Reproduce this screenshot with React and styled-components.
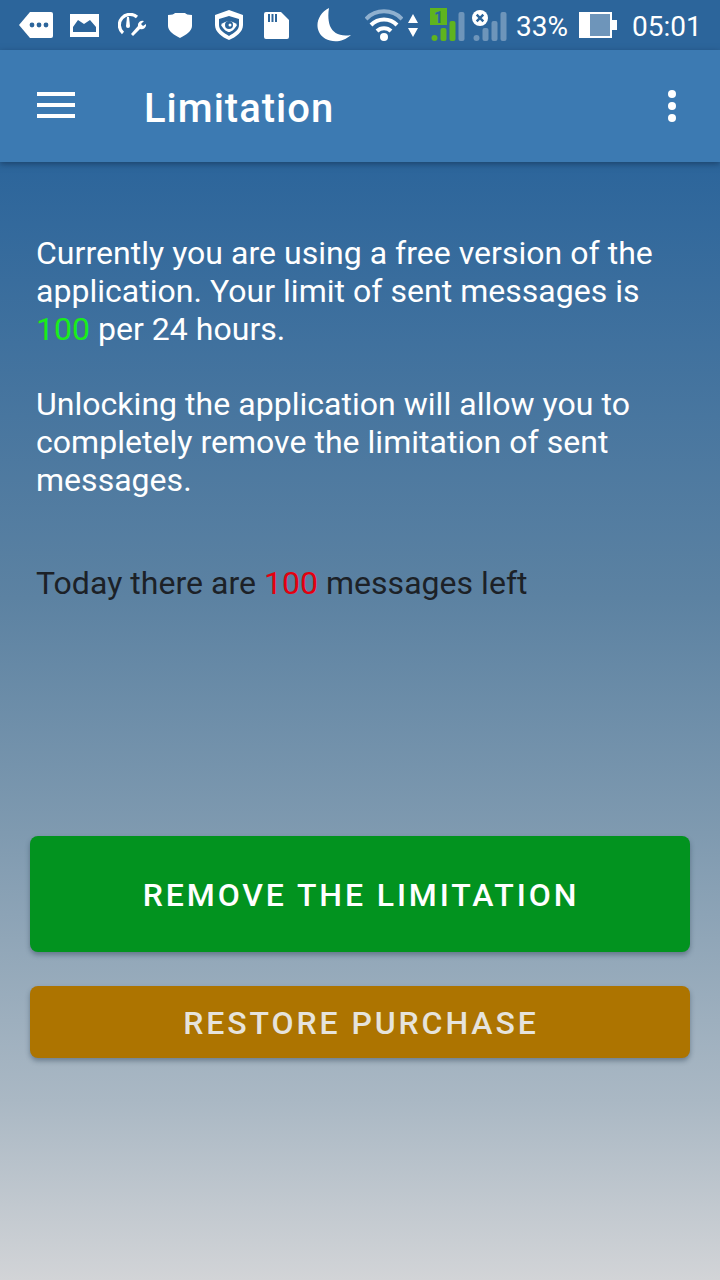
import styled, { createGlobalStyle } from 'styled-components'

const GlobalStyle = createGlobalStyle`
  html, body {
    margin: 0;
    padding: 0;
  }

  body {
    font-family: Roboto, "Liberation Sans", sans-serif;
  }
`

const Screen = styled.div`
  width: 720px;
  height: 1280px;
  display: flex;
  flex-direction: column;
  overflow: hidden;
  background: #2c659b;
`

const StatusBar = styled.div`
  height: 50px;
  flex: none;
  display: flex;
  align-items: center;
  background: #2c659b;
  color: #fff;
  padding-left: 19px;
`

const StatusIcon = styled.svg`
  display: block;
  flex: none;
  margin-right: ${(p) => p.$gap}px;
`

const StatusText = styled.span`
  font-size: 28px;
  line-height: 46px;
  margin-top: 4px;
  color: #fff;
  margin-right: ${(p) => p.$gap}px;
  white-space: nowrap;
`

const Toolbar = styled.header`
  height: 112px;
  flex: none;
  display: flex;
  align-items: center;
  background: #3c7ab2;
  box-shadow: 0 2px 6px rgba(15, 40, 70, 0.55);
  position: relative;
  z-index: 1;
`

const MenuButton = styled.button`
  width: 38px;
  height: 26px;
  margin-left: 37px;
  margin-top: -2px;
  padding: 0;
  border: none;
  background: none;
  display: flex;
  flex-direction: column;
  justify-content: space-between;
`

const MenuLine = styled.span`
  display: block;
  height: 4px;
  background: #fff;
`

const Title = styled.h1`
  flex: 1;
  margin: 4px 0 0 69px;
  font-size: 40px;
  font-weight: 500;
  color: #fff;
  letter-spacing: 1px;
`

const MoreButton = styled.button`
  width: 8px;
  height: 32px;
  margin-right: 44px;
  margin-top: -1px;
  padding: 0;
  border: none;
  background: none;
  display: flex;
  flex-direction: column;
  justify-content: space-between;
`

const MoreDot = styled.span`
  display: block;
  width: 8px;
  height: 8px;
  border-radius: 50%;
  background: #fff;
`

const Content = styled.main`
  flex: 1;
  display: flex;
  flex-direction: column;
  padding: 72px 30px 0;
  background: linear-gradient(180deg, #2c659b 0%, #5c82a2 39%, #7f9ab0 60%, #aab8c4 84%, #d2d4d7 100%);
`

const Paragraph = styled.p`
  margin: 0 0 ${(p) => p.$after}px;
  padding: 0 6px;
  font-size: 32px;
  line-height: 38px;
  letter-spacing: 0.03px;
  color: ${(p) => p.$color};
`

const Count = styled.span`
  color: ${(p) => p.$color};
`

const ActionButton = styled.button`
  display: block;
  width: 660px;
  height: ${(p) => p.$height}px;
  margin-bottom: 34px;
  padding: 2px 0 0 2px;
  border: none;
  border-radius: 8px;
  background: ${(p) => p.$bg};
  color: ${(p) => p.$color};
  box-shadow: 0 3px 5px rgba(30, 50, 70, 0.4);
  font-family: inherit;
  font-size: 32px;
  font-weight: 500;
  letter-spacing: 2.9px;
  text-transform: uppercase;
`

const barTops = [0, 20, 13, 4]

const Signal = ({ active }) => (
  <StatusIcon width="35" height="34" viewBox="0 0 35 34" $gap={active ? 7 : 9}>
    <circle cx="4.5" cy="30" r="3" fill={active ? '#5fb41e' : '#6e95ba'} />
    {[1, 2, 3].map((i) => (
      <rect
        key={i}
        x={1.5 + i * 9}
        y={barTops[i]}
        width="6"
        height={33 - barTops[i]}
        rx="2"
        fill={active && i < 3 ? '#5fb41e' : '#6e95ba'}
      />
    ))}
    {active && <rect x="0" y="0" width="17" height="17" fill="#5fb41e" />}
    {active && <text x="8.5" y="14.5" fontSize="16" fontWeight="700" textAnchor="middle" fill="#2c659b" fontFamily="Roboto">1</text>}
    {!active && <circle cx="8" cy="10" r="8" fill="#fff" />}
    {!active && <path d="M4.700 6.700l6.600 6.600M11.300 6.700l-6.600 6.600" stroke="#2c659b" strokeWidth="2.400" />}
  </StatusIcon>
)

const App = () => (
  <>
    <GlobalStyle />
    <Screen>
      <StatusBar>
        <StatusIcon width="34" height="26" viewBox="0 0 34 26" $gap={17}>
          <path d="M11 0h21a2 2 0 0 1 2 2v22a2 2 0 0 1-2 2H11L0 13z" fill="#fff" />
          <circle cx="13" cy="13" r="2.400" fill="#2c659b" />
          <circle cx="20" cy="13" r="2.400" fill="#2c659b" />
          <circle cx="27" cy="13" r="2.400" fill="#2c659b" />
        </StatusIcon>
        <StatusIcon width="29" height="23" viewBox="0 0 29 23" $gap={19}>
          <path fillRule="evenodd" d="M0 0h29v23H0zM3 18h23v-5l-6-7-6 4-6-4-5 7z" fill="#fff" />
        </StatusIcon>
        <StatusIcon width="28" height="24" viewBox="0 0 28 24" $gap={22}>
          <path d="M5 20A10 10 0 1 1 19 4" fill="none" stroke="#fff" strokeWidth="3.200" />
          <path d="M9 4h2l1 9a2 2 0 0 1-4 0z" fill="#fff" />
          <path d="M13 21l7-8a4.500 4.500 0 0 1 6-5l-3 3 2 2 3-2a4.500 4.500 0 0 1-6 5l-7 7z" fill="#fff" />
        </StatusIcon>
        <StatusIcon width="24" height="25" viewBox="0 0 24 25" $gap={23}>
          <path d="M0 2c4 0 6-1 7-2h10c1 1 3 2 7 2v11c0 5-6 9-12 12C6 22 0 18 0 13z" fill="#fff" />
        </StatusIcon>
        <StatusIcon width="28" height="30" viewBox="0 0 28 30" $gap={21}>
          <path fillRule="evenodd" d="M14 0l14 5v10c0 7-7 12-14 15C7 27 0 22 0 15V5zM14 6L4 9v6c0 5 5 8 10 11 5-3 10-6 10-11V9z" fill="#fff" />
          <path d="M6 15c4-5 12-5 16 0-3 5-6 7-8 7s-5-2-8-7z" fill="#fff" />
          <circle cx="14" cy="15" r="4" fill="#2c659b" />
          <circle cx="15" cy="15" r="1.500" fill="#fff" />
        </StatusIcon>
        <StatusIcon width="25" height="27" viewBox="0 0 25 27" $gap={28}>
          <path fillRule="evenodd" d="M2 0h15l8 8v17a2 2 0 0 1-2 2H2a2 2 0 0 1-2-2V2a2 2 0 0 1 2-2zM4 2v8h2V2zM7.500 2v8h2V2zM11 2v8h2V2z" fill="#fff" />
        </StatusIcon>
        <StatusIcon width="34" height="34" viewBox="0 0 34 34" $gap={14}>
          <path d="M12 0C2 5-2 16 2 24c4 9 20 14 32 3-11 2-18-2-21-9-2-6-2-12-1-18z" fill="#fff" />
        </StatusIcon>
        <StatusIcon width="38" height="33" viewBox="0 0 38 33" $gap={5}>
          <path d="M1 10A25 25 0 0 1 37 10" fill="none" stroke="#8fb0cf" strokeWidth="4" />
          <path d="M6 16A18 18 0 0 1 32 16" fill="none" stroke="#fff" strokeWidth="4" />
          <path d="M12 22A10 10 0 0 1 26 22" fill="none" stroke="#fff" strokeWidth="4" />
          <circle cx="19" cy="28" r="4" fill="#fff" />
        </StatusIcon>
        <StatusIcon width="10" height="23" viewBox="0 0 10 23" $gap={12}>
          <path d="M5 0l5 9H0zM0 14h10l-5 9z" fill="#fff" />
        </StatusIcon>
        <Signal active />
        <Signal />
        <StatusText $gap={11}>33%</StatusText>
        <StatusIcon width="38" height="26" viewBox="0 0 38 26" $gap={15}>
          <rect x="0" y="0" width="33" height="26" fill="#fff" />
          <rect x="11" y="2" width="20" height="22" fill="#6e95ba" />
          <rect x="33" y="8" width="5" height="10" fill="#fff" />
        </StatusIcon>
        <StatusText $gap={0}>05:01</StatusText>
      </StatusBar>
      <Toolbar>
        <MenuButton aria-label="Menu">
          <MenuLine />
          <MenuLine />
          <MenuLine />
        </MenuButton>
        <Title>Limitation</Title>
        <MoreButton aria-label="More">
          <MoreDot />
          <MoreDot />
          <MoreDot />
        </MoreButton>
      </Toolbar>
      <Content>
        <Paragraph $color="#fff" $after={37}>
          Currently you are using a free version of the application. Your limit of sent messages is{' '}
          <Count $color="#19ee19">100</Count> per 24 hours.
        </Paragraph>
        <Paragraph $color="#fff" $after={65}>
          Unlocking the application will allow you to completely remove the limitation of sent messages.
        </Paragraph>
        <Paragraph $color="#1c2127" $after={234}>
          Today there are <Count $color="#e4000f">100</Count> messages left
        </Paragraph>
        <ActionButton $height={116} $bg="#02931f" $color="#fff">Remove the limitation</ActionButton>
        <ActionButton $height={72} $bg="#ad7400" $color="#e6e3dc">Restore purchase</ActionButton>
      </Content>
    </Screen>
  </>
)

export default App
